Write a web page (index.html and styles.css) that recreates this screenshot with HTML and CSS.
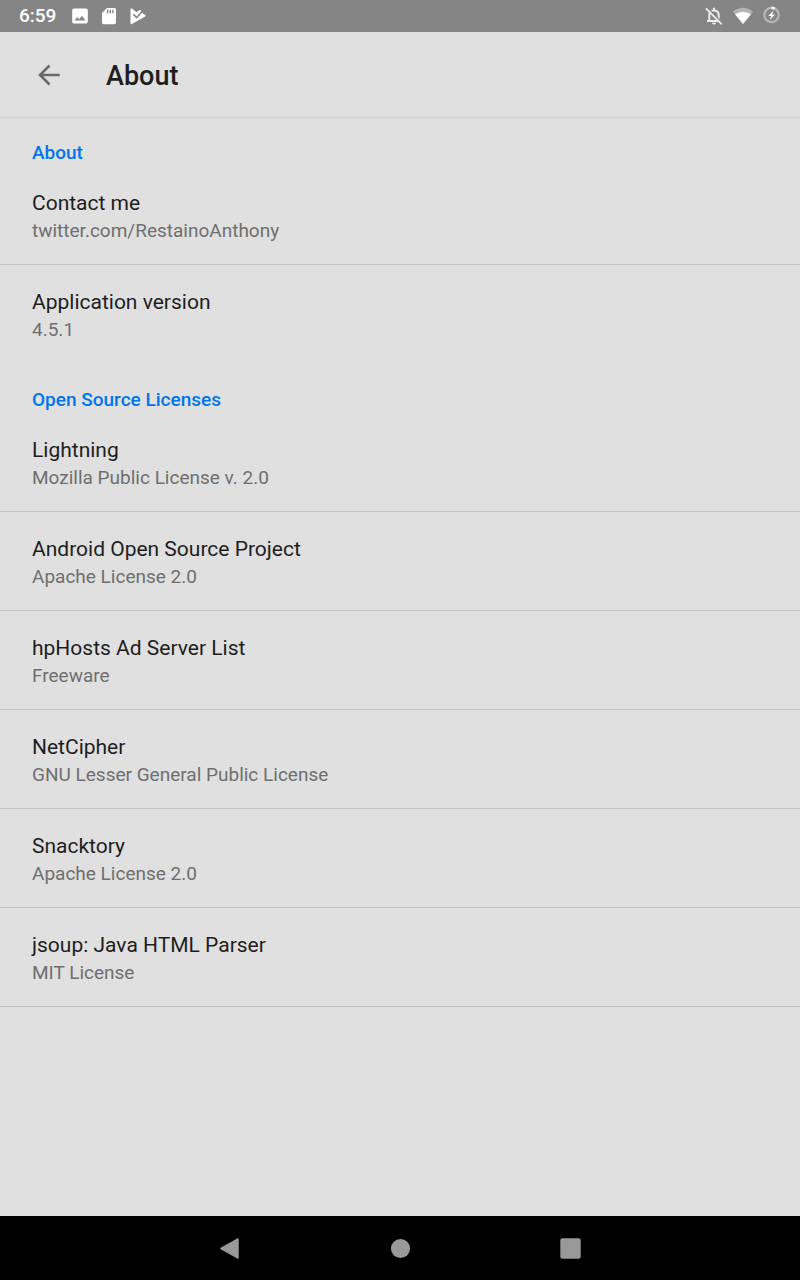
FILE: index.html
```html
<!DOCTYPE html>
<html lang="en">
<head>
<meta charset="utf-8">
<meta name="viewport" content="width=device-width, initial-scale=1">
<title>About</title>
<link rel="stylesheet" href="styles.css">
</head>
<body>
<div class="screen">
  <div class="status-bar">
    <span class="clock">6:59</span>
    <div class="notifications">
      <svg class="status-icon" viewBox="0 0 20 20" fill="#fff" aria-hidden="true"><path fill-rule="evenodd" d="M4 2.500h12a1.800 1.800 0 0 1 1.800 1.800v11.400a1.800 1.800 0 0 1-1.800 1.800H4a1.800 1.800 0 0 1-1.800-1.800V4.300A1.800 1.800 0 0 1 4 2.500zM4.500 14.500h11l-3.600-4.800-2.700 3.500-1.900-2.200z"/></svg>
      <svg class="status-icon" viewBox="0 0 20 20" aria-hidden="true"><path fill="#fff" d="M8 2h7.300A1.700 1.700 0 0 1 17 3.700v12.900a1.700 1.700 0 0 1-1.700 1.700H4.700A1.700 1.700 0 0 1 3 16.600V7z"/><path d="M8.700 3.700v3.500M11.300 3.700v3.500M13.900 3.700v3.500" stroke="#858585" stroke-width="1.400"/></svg>
      <svg class="status-icon" viewBox="0 0 20 20" aria-hidden="true"><path fill="#fff" d="M2.500 3.200Q2.500 1.800 3.900 2.500L8.500 6.200 12.300 3.800 14.800 7.600 17.200 8.900Q18.500 9.800 17.200 10.600L3.900 18Q2.500 18.600 2.500 17.100z"/><path d="M5.300 8.200l3.300 3.300 6.200-6.700" fill="none" stroke="#858585" stroke-width="1.600"/></svg>
    </div>
    <div class="system-icons">
      <svg class="status-icon" viewBox="0 0 20 20" aria-hidden="true"><path d="M5.300 14.700V9.300c0-3 1.700-4.900 4.700-4.900s4.700 1.900 4.700 4.900v5.400M3 14.900h14M10 1.800v2.500" fill="none" stroke="#ededed" stroke-width="2"/><path d="M8 16.600h4a2 2 0 0 1-4 0z" fill="#ededed"/><path d="M3.500 1.600l15 15.400" stroke="#858585" stroke-width="1.500"/><path d="M2 2.400l15.800 16" stroke="#ededed" stroke-width="1.800"/></svg>
      <svg class="status-icon" viewBox="0 0 20 20" aria-hidden="true"><path d="M0 5.500Q10-2 20 5.500L10 18z" fill="#b3b3b3"/><path d="M2 8.300Q10 3 18 8.300L10 18z" fill="#fff"/></svg>
      <svg class="status-icon" viewBox="0 0 20 20" aria-hidden="true"><circle cx="9.500" cy="9" r="7.200" fill="none" stroke="#b5b5b5" stroke-width="2.300"/><path d="M9.500 1.800a7.200 7.200 0 0 1 3.200.8" fill="none" stroke="#fff" stroke-width="2.500"/><path d="M11.700 4.500L6.200 9.900h3l-1.700 4.300 5.600-5.600h-3z" fill="#fff"/></svg>
    </div>
  </div>

  <header class="app-bar">
    <button class="back" type="button" aria-label="Navigate up">
      <svg class="back-icon" viewBox="0 0 24 24" aria-hidden="true"><path d="M22.800 12H3.500M12.500 2.500L3 12l9.500 9.500" fill="none" stroke="#696969" stroke-width="2.500"/></svg>
    </button>
    <h1 class="title">About</h1>
  </header>

  <main class="content">
    <section class="group">
      <h2 class="group-title">About</h2>
      <ul class="list">
        <li class="item"><span class="name">Contact me</span><span class="summary">twitter.com/RestainoAnthony</span></li>
        <li class="item"><span class="name">Application version</span><span class="summary">4.5.1</span></li>
      </ul>
    </section>
    <section class="group">
      <h2 class="group-title">Open Source Licenses</h2>
      <ul class="list list-closed">
        <li class="item"><span class="name">Lightning</span><span class="summary">Mozilla Public License v. 2.0</span></li>
        <li class="item"><span class="name">Android Open Source Project</span><span class="summary">Apache License 2.0</span></li>
        <li class="item"><span class="name">hpHosts Ad Server List</span><span class="summary">Freeware</span></li>
        <li class="item"><span class="name">NetCipher</span><span class="summary">GNU Lesser General Public License</span></li>
        <li class="item"><span class="name">Snacktory</span><span class="summary">Apache License 2.0</span></li>
        <li class="item"><span class="name">jsoup: Java HTML Parser</span><span class="summary">MIT License</span></li>
      </ul>
    </section>
  </main>

  <nav class="nav-bar" aria-label="System navigation">
    <button class="nav-button" type="button" aria-label="Back"><svg class="nav-icon" viewBox="0 0 24 24" aria-hidden="true"><path d="M20 3v19L3 12.500z" fill="#999" stroke="#999" stroke-width="1.500" stroke-linejoin="round"/></svg></button>
    <button class="nav-button" type="button" aria-label="Home"><svg class="nav-icon" viewBox="0 0 24 24" aria-hidden="true"><circle cx="12.500" cy="12.500" r="9.600" fill="#999"/></svg></button>
    <button class="nav-button" type="button" aria-label="Recent apps"><svg class="nav-icon" viewBox="0 0 24 24" aria-hidden="true"><rect x="2.300" y="2.300" width="20.400" height="20.400" rx="2" fill="#999"/></svg></button>
  </nav>
</div>
</body>
</html>
```
FILE: styles.css
```css
* {
  box-sizing: border-box;
}

body {
  margin: 0;
  background: #e0e0e0;
  color: #1e1e1e;
  font-family: Roboto, "Liberation Sans", sans-serif;
}

button {
  padding: 0;
  border: 0;
  background: none;
}

.screen {
  display: flex;
  flex-direction: column;
  min-height: 100vh;
}

.status-bar {
  display: flex;
  align-items: center;
  height: 32px;
  padding: 0 18px 0 19px;
  background: #858585;
  color: #fff;
}

.clock {
  font-size: 19px;
  font-weight: 500;
  line-height: 32px;
}

.notifications,
.system-icons {
  display: flex;
  gap: 9px;
}

.notifications {
  margin-left: 14px;
}

.system-icons {
  margin-left: auto;
}

.status-icon {
  display: block;
  width: 20px;
  height: 20px;
}

.app-bar {
  display: flex;
  align-items: center;
  gap: 32px;
  height: 86px;
  padding: 0 24px;
  border-bottom: 1px solid #cfcfcf;
  box-shadow: 0 1px 1px #d9d9d9;
}

.back {
  display: grid;
  place-items: center;
  width: 50px;
  height: 50px;
}

.back-icon {
  width: 24px;
  height: 24px;
}

.title {
  margin: 0;
  padding-top: 2px;
  font-size: 27px;
  font-weight: 500;
  line-height: 32px;
}

.content {
  flex: 1;
}

.group-title {
  margin: 0;
  padding: 22px 32px 0;
  color: #0075eb;
  font-size: 19px;
  font-weight: 500;
  line-height: 30px;
}

.group:first-child .group-title {
  padding-top: 20px;
}

.list {
  margin: 0;
  padding: 0;
  list-style: none;
}

.group-title + .list {
  margin-top: -2px;
}

.item {
  display: flex;
  flex-direction: column;
  padding: 23px 32px 19px;
}

.item + .item {
  border-top: 1px solid #c2c2c2;
}

.list-closed {
  border-bottom: 1px solid #c2c2c2;
}

.name {
  font-size: 21px;
  line-height: 28px;
}

.summary {
  color: #6f6f6f;
  font-size: 19px;
  line-height: 28px;
}

.nav-bar {
  display: flex;
  justify-content: center;
  gap: 122px;
  height: 64px;
  background: #000;
}

.nav-button {
  display: grid;
  place-items: center;
  width: 48px;
  height: 64px;
}

.nav-icon {
  width: 24px;
  height: 24px;
}
```
